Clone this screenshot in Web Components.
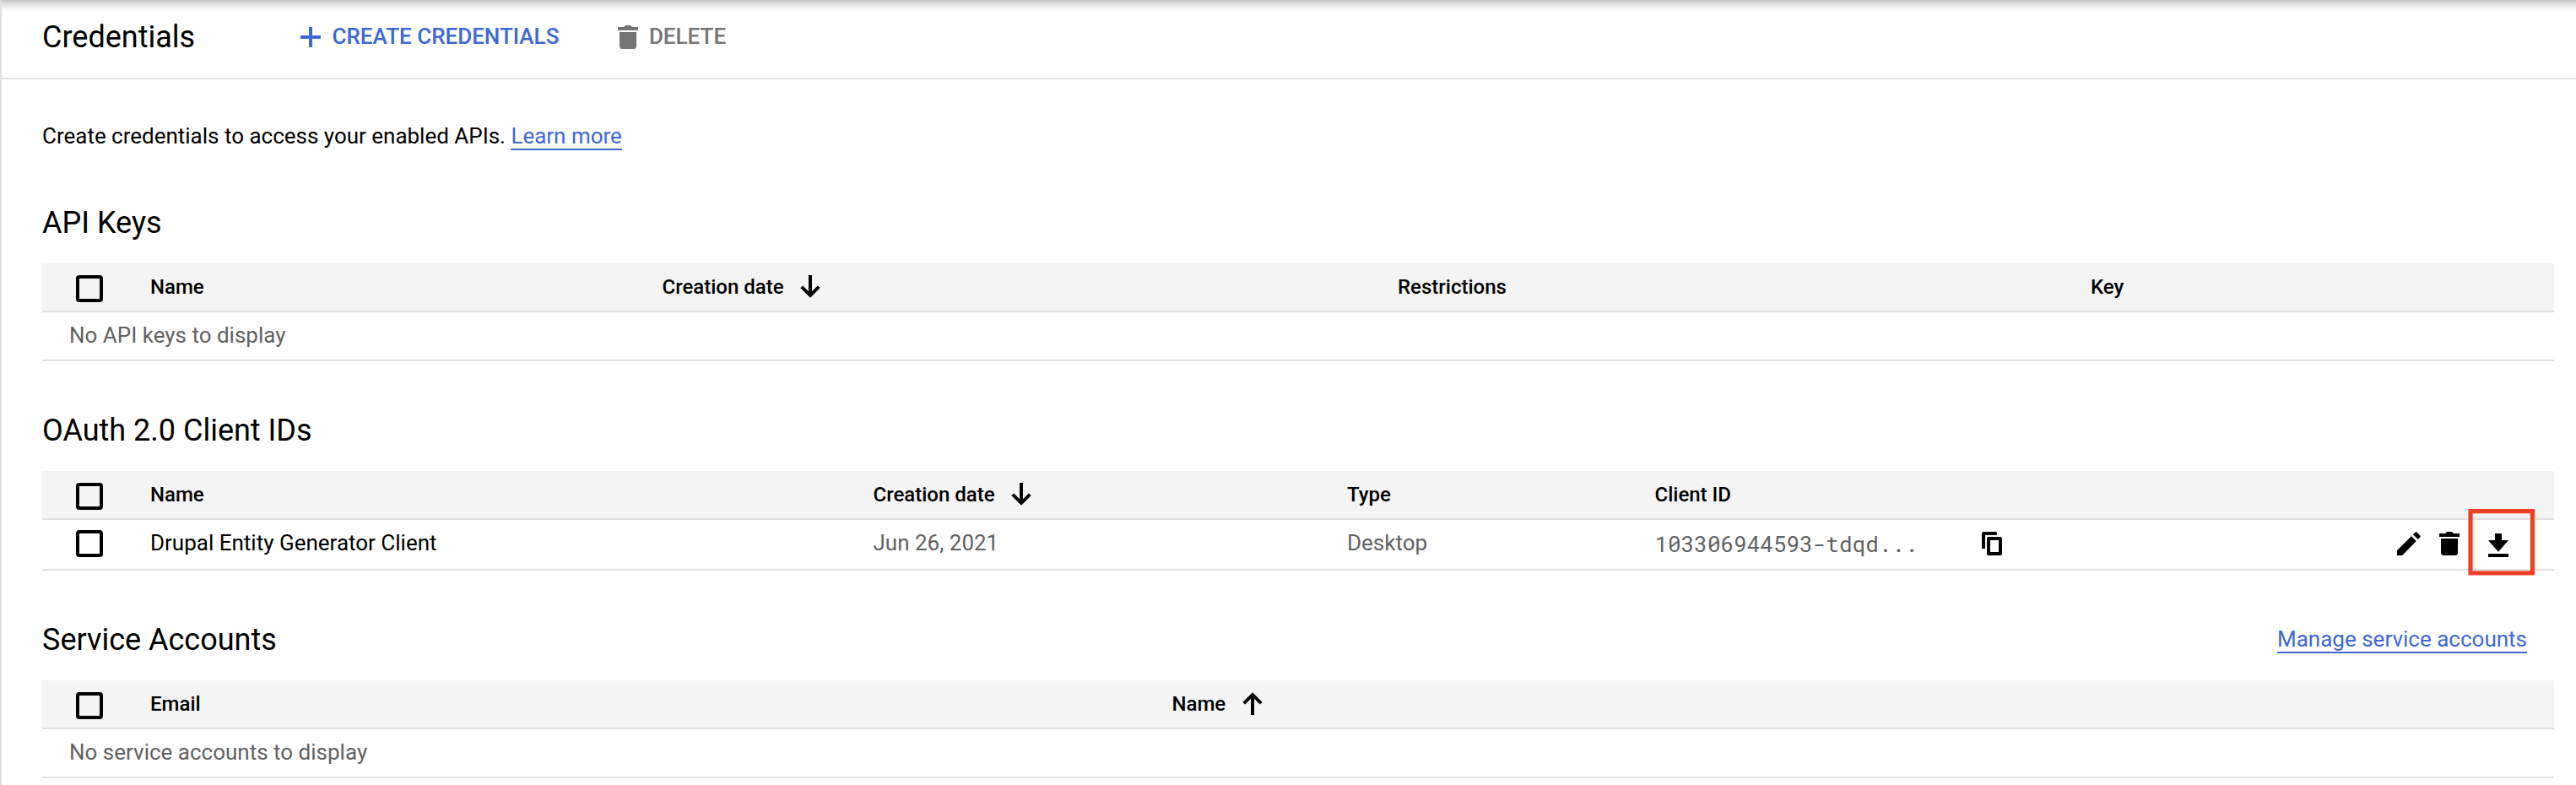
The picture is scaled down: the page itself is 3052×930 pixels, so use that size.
<!DOCTYPE html>
<html lang="en">
<head>
<meta charset="utf-8">
<title>Credentials</title>
<style>
html, body { margin: 0; background: #fff; }
body { height: 930px; overflow: hidden; font-family: Roboto, "Liberation Sans", sans-serif; color: #000; }
.c4 { --cols: 128px 606.5px 871.5px 821px 1fr; }
.c5 { --cols: 128px 856.5px 561.5px 364.5px 1fr; }
.c2 { --cols: 128px 1210.5px 1fr; }
</style>
</head>
<body>
<credentials-page>
  <page-toolbar slot="toolbar">
    Credentials
    <tool-button slot="actions" icon="plus">CREATE CREDENTIALS</tool-button>
    <tool-button slot="actions" icon="trash" disabled>DELETE</tool-button>
  </page-toolbar>
  <intro-text>Create credentials to access your enabled APIs. <text-link>Learn more</text-link></intro-text>
  <data-section class="c4">
    <span slot="title">API Keys</span>
    <table-row head><check-box></check-box><table-cell>Name</table-cell><table-cell sort="down">Creation date</table-cell><table-cell>Restrictions</table-cell><table-cell>Key</table-cell></table-row>
    <table-row empty><table-cell muted>No API keys to display</table-cell></table-row>
  </data-section>
  <data-section class="c5">
    <span slot="title">OAuth 2.0 Client IDs</span>
    <table-row head><check-box></check-box><table-cell>Name</table-cell><table-cell sort="down">Creation date</table-cell><table-cell>Type</table-cell><table-cell>Client ID</table-cell></table-row>
    <table-row tall><check-box></check-box><table-cell>Drupal Entity Generator Client</table-cell><table-cell muted>Jun 26, 2021</table-cell><table-cell muted>Desktop</table-cell><client-actions>103306944593-tdqd...</client-actions></table-row>
  </data-section>
  <data-section class="c2">
    <span slot="title">Service Accounts</span>
    <text-link slot="link">Manage service accounts</text-link>
    <table-row head><check-box></check-box><table-cell>Email</table-cell><table-cell sort="up">Name</table-cell></table-row>
    <table-row empty><table-cell muted>No service accounts to display</table-cell></table-row>
  </data-section>
</credentials-page>
<script>
const define = (name, html) => customElements.define(name, class extends HTMLElement {
  constructor() {
    super();
    this.attachShadow({ mode: 'open' }).innerHTML = html;
  }
});

// name: [width, height, path data]
const ICONS = {
  plus: [24, 24, 'M10 0h4v10h10v4H14v10h-4V14H0v-4h10z'],
  trash: [24, 28, 'M0 2h7l2-2h6l2 2h7v4H0zM2 8h20v16.5a3.5 3.5 0 0 1-3.5 3.5h-13A3.5 3.5 0 0 1 2 24.5z'],
  pencil: [28, 28, 'M0 22L17 5.2 22.8 11 6.2 28H0zM18.9 3.3L21.4.8Q22.5-.2 23.6.8L27.3 4.5Q28.2 5.6 27.3 6.6L24.8 9.1z'],
  download: [24, 28, 'M8 0h8v8h8L12 21.8 0 8h8zM0 24h24v4H0z'],
  copy: [24, 28, 'M2 0H17.8V4H4V20H0V2Q0 0 2 0zM8 6H22Q24 6 24 8V26Q24 28 22 28H8Q6 28 6 26V8Q6 6 8 6zM10 10V24H20V10z'],
  down: [24, 27, 'M10 0h4v19.3l6.8-6.8 2.9 2.6L12 26.8.3 15.1l2.9-2.6 6.8 6.8z'],
  up: [24, 27, 'M10 27h4V7.7l6.8 6.8 2.9-2.6L12 .2.3 11.9l2.9 2.6L10 7.7z']
};

customElements.define('ui-icon', class extends HTMLElement {
  constructor() {
    super();
    const [w, h, d] = ICONS[this.getAttribute('name')] || ICONS.plus;
    this.attachShadow({ mode: 'open' }).innerHTML = `
      <style>:host { display: block; flex: none; width: ${w}px; height: ${h}px; } svg { display: block; fill: currentColor; }</style>
      <svg width="${w}" height="${h}" viewBox="0 0 ${w} ${h}"><path fill-rule="evenodd" d="${d}"/></svg>`;
  }
});

define('text-link', `<style>
  :host { display: inline; font-size: 26px; color: #3d68d3; border-bottom: 2px solid #3d68d3; }
</style><slot></slot>`);

define('intro-text', `<style>
  :host { display: block; margin: 51px 0 63px 48px; font-size: 26px; line-height: 32px; letter-spacing: -0.01px; }
</style><slot></slot>`);

define('check-box', `<style>
  :host { display: block; box-sizing: border-box; width: 32px; height: 32px; margin-left: 40px; border: 4px solid #000; border-radius: 4px; }
</style>`);

customElements.define('tool-button', class extends HTMLElement {
  constructor() {
    super();
    this.attachShadow({ mode: 'open' }).innerHTML = `<style>
      :host { display: flex; align-items: center; gap: 13.5px; font-size: 26px; font-weight: 500; line-height: 32px; color: #3d68d3; }
      :host([disabled]) { color: #757575; gap: 13px; }
      span { padding-bottom: 2px; }
    </style><ui-icon name="${this.getAttribute('icon')}"></ui-icon><span><slot></slot></span>`;
  }
});

define('page-toolbar', `<style>
  :host { display: flex; align-items: center; box-sizing: border-box; height: 94px; padding: 0 0 4px 48px;
    border-bottom: 2px solid #e0e0e0; white-space: nowrap;
    background: linear-gradient(#c3c3c3 0, #d6d6d6 3px, #ebebeb 7px, #f9f9f9 11px, #fff 15px) no-repeat 0 0 / 100% 15px; }
  .title { width: 306px; font-size: 36px; line-height: 48px; }
  nav { display: flex; gap: 69.5px; }
</style><div class="title"><slot></slot></div><nav><slot name="actions"></slot></nav>`);

define('credentials-page', `<style>
  :host { display: block; box-sizing: border-box; height: 930px; border-left: 2px solid #e0e0e0; }
</style><slot name="toolbar"></slot><main><slot></slot></main>`);

define('data-section', `<style>
  :host { display: block; margin: 58px 26px 0 48px; }
  header { display: flex; align-items: center; justify-content: space-between; height: 48px; margin-bottom: 24px; padding-right: 32px; }
  h2 { margin: 0; font-size: 36px; font-weight: 400; line-height: 48px; }
  .link { line-height: 32px; padding-bottom: 2px; font-size: 26px; }
</style><header><h2><slot name="title"></slot></h2><div class="link"><slot name="link"></slot></div></header><slot></slot>`);

define('table-row', `<style>
  :host { display: grid; grid-template-columns: var(--cols); align-items: center; height: 56px; border-bottom: 2px solid #e0e0e0; font-size: 26px; }
  :host([head]) { background: #f4f4f4; font-size: 24px; font-weight: 500; }
  :host([head]) ::slotted(check-box) { margin-top: 4px; }
  :host([tall]) { box-sizing: border-box; height: 60px; padding-bottom: 2px; }
  :host([empty]) { grid-template-columns: 1fr; padding-left: 32px; }
  :host(:not([head])) ::slotted(table-cell) { padding-bottom: 2px; }
</style><slot></slot>`);

customElements.define('table-cell', class extends HTMLElement {
  constructor() {
    super();
    const sort = this.getAttribute('sort');
    this.attachShadow({ mode: 'open' }).innerHTML = `<style>
      :host { display: flex; align-items: center; gap: 19.5px; line-height: 32px; white-space: nowrap; }
      :host([muted]) { color: #616161; }
      ui-icon { margin-bottom: 1px; }
    </style><slot></slot>${sort ? `<ui-icon name="${sort}"></ui-icon>` : ''}`;
  }
});

define('client-actions', `<style>
  :host { display: flex; align-items: center; padding-right: 54px; }
  .id { width: 387.5px; font: 26px/32px "Roboto Mono", "Liberation Mono", monospace; color: #616161; }
  .row { display: flex; align-items: center; margin-left: auto; }
  .trash { margin: 0 34px 0 22px; }
  .download { position: relative; top: 2px; }
  .mark { position: absolute; left: -24px; top: -30px; }
</style>
<span class="id"><slot></slot></span><ui-icon name="copy"></ui-icon>
<div class="row">
  <ui-icon name="pencil"></ui-icon><ui-icon class="trash" name="trash"></ui-icon>
  <div class="download"><ui-icon name="download"></ui-icon>
    <svg class="mark" width="80" height="80"><rect x="3" y="3.6" width="73.4" height="73.3" fill="none" stroke="#ee4024" stroke-width="5.2"/></svg>
  </div>
</div>`);
</script>
</body>
</html>
